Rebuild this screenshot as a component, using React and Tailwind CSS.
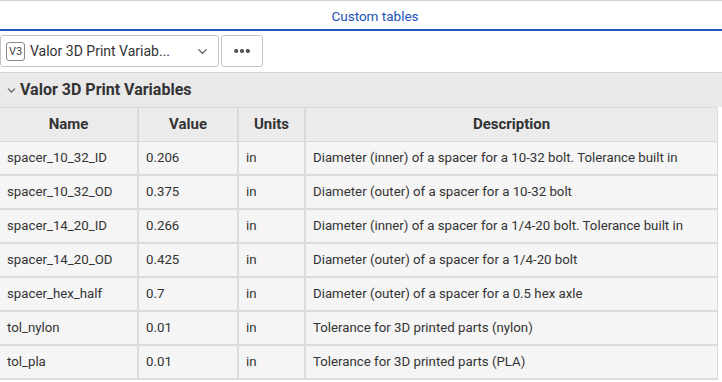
import { ChevronDown, MoreHorizontal } from 'lucide-react';

const ROWS = [
  { name: 'spacer_10_32_ID', value: '0.206', units: 'in', desc: 'Diameter (inner) of a spacer for a 10-32 bolt. Tolerance built in' },
  { name: 'spacer_10_32_OD', value: '0.375', units: 'in', desc: 'Diameter (outer) of a spacer for a 10-32 bolt' },
  { name: 'spacer_14_20_ID', value: '0.266', units: 'in', desc: 'Diameter (inner) of a spacer for a 1/4-20 bolt. Tolerance built in' },
  { name: 'spacer_14_20_OD', value: '0.425', units: 'in', desc: 'Diameter (outer) of a spacer for a 1/4-20 bolt' },
  { name: 'spacer_hex_half', value: '0.7', units: 'in', desc: 'Diameter (outer) of a spacer for a 0.5 hex axle' },
  { name: 'tol_nylon', value: '0.01', units: 'in', desc: 'Tolerance for 3D printed parts (nylon)' },
  { name: 'tol_pla', value: '0.01', units: 'in', desc: 'Tolerance for 3D printed parts (PLA)' },
];

export default function App() {
  return (
    <div className="w-[722px] h-[382px] bg-white overflow-hidden text-[#333] text-[13.25px]" style={{ fontFamily: 'Roboto, sans-serif' }}>
      {/* tab */}
      <div className="border-t border-[#d4d4d4] h-[31px] flex items-end justify-center pl-[28px] border-b-2 border-b-[#1f56b8]">
        <span className="text-[#2050b8] text-[13.5px] leading-[16px] pb-[5px]">Custom tables</span>
      </div>

      {/* toolbar */}
      <div className="h-[42px] flex items-start pt-[4px] gap-[2px] border-b border-[#d4d4d4]">
        <button className="w-[219px] h-[32px] border border-[#c4c4c4] rounded-[3px] flex items-center pl-[5px] pr-[8px]">
          <span className="w-[19px] h-[19px] border border-[#888] rounded-[3px] text-[11px] leading-[17px] text-[#444] flex items-center justify-center">V3</span>
          <span className="ml-[5px] text-[14px] text-[#333] flex-1 text-left">Valor 3D Print Variab...</span>
          <ChevronDown size={15} strokeWidth={2} className="text-[#555]" />
        </button>
        <button className="w-[42px] h-[32px] border border-[#c4c4c4] rounded-[3px] flex items-center justify-center">
          <MoreHorizontal size={20} strokeWidth={3} className="text-[#444]" />
        </button>
      </div>

      {/* section */}
      <div className="h-[34px] bg-[#e9e9e9] flex items-center pl-[5px] gap-[2px]">
        <ChevronDown size={13} strokeWidth={2} className="text-[#555]" />
        <span className="font-bold text-[16px] text-[#333]">Valor 3D Print Variables</span>
      </div>

      <div className="w-[718px] bg-[#f5f5f5] border-t border-r border-[#dadada]">
        <div className="grid grid-cols-[139px_100px_67px_1fr] h-[34px] bg-[#ebebeb] border-b border-[#d6d6d6] font-bold text-[15px]">
          <div className="flex items-center justify-center border-r-2 border-[#dadada]">Name</div>
          <div className="flex items-center justify-center border-r-2 border-[#dadada]">Value</div>
          <div className="flex items-center justify-center border-r-2 border-[#dadada]">Units</div>
          <div className="flex items-center justify-center">Description</div>
        </div>
        {ROWS.map((r) => (
          <div key={r.name} className="grid grid-cols-[139px_100px_67px_1fr] h-[34px] border-b-2 border-[#dcdcdc]">
            <div className="flex items-center pl-[7px] border-r-2 border-[#dcdcdc]">{r.name}</div>
            <div className="flex items-center pl-[7px] border-r-2 border-[#dcdcdc]">{r.value}</div>
            <div className="flex items-center pl-[7px] border-r-2 border-[#dcdcdc]">{r.units}</div>
            <div className="flex items-center pl-[7px]">{r.desc}</div>
          </div>
        ))}
      </div>
    </div>
  );
}
